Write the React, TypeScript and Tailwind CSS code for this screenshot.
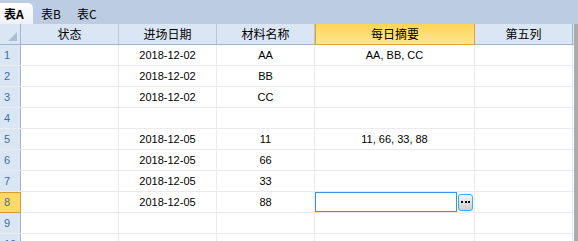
import React from "react";

const rows = [
  { date: "2018-12-02", name: "AA", sum: "AA, BB, CC" },
  { date: "2018-12-02", name: "BB", sum: "" },
  { date: "2018-12-02", name: "CC", sum: "" },
  { date: "", name: "", sum: "" },
  { date: "2018-12-05", name: "11", sum: "11, 66, 33, 88" },
  { date: "2018-12-05", name: "66", sum: "" },
  { date: "2018-12-05", name: "33", sum: "" },
  { date: "2018-12-05", name: "88", sum: "", editing: true },
  { date: "", name: "", sum: "" },
  { date: "", name: "", sum: "" },
];

const cjk = "font-['SimSun','Noto_Sans_CJK_SC',sans-serif]";
const latin = "font-['Liberation_Sans','Noto_Sans_CJK_SC',sans-serif]";

export default function App() {
  return (
    <div className={`w-[578px] h-[241px] overflow-hidden bg-[#ababab] ${cjk} text-[12px] text-black`}>
      {/* Sheet tabs */}
      <div className="h-[24px] bg-[#bccde3] flex items-end">
        <div className="h-[21px] w-[33px] bg-gradient-to-b from-[#ffffff] to-[#eef2f8] rounded-tr-[5px] flex items-center pl-[4px] font-bold">
          表A
        </div>
        <div className="h-[21px] ml-[8px] flex items-center">表B</div>
        <div className="h-[21px] ml-[16px] flex items-center">表C</div>
      </div>

      {/* Grid */}
      <div className="w-[574px] bg-white">
        {/* Column header */}
        <div className="flex h-[21px] bg-[#dbe6f4] border-b border-[#9eb4cf]">
          <div className="w-[21px] border-r border-[#9eb4cf] relative">
            <div className="absolute right-[3px] bottom-[3px] w-0 h-0 border-l-[9px] border-l-transparent border-b-[9px] border-b-[#aebfd3]" />
          </div>
          <div className="w-[98px] border-r border-[#b6c7dc] flex items-center justify-center">状态</div>
          <div className="w-[98px] border-r border-[#b6c7dc] flex items-center justify-center">进场日期</div>
          <div className="w-[98px] border-r border-[#b6c7dc] flex items-center justify-center">材料名称</div>
          <div className="w-[160px] bg-gradient-to-b from-[#ffd458] to-[#ffe78e] border-l border-r border-b border-[#dba33a] -mb-px flex items-center justify-center">
            每日摘要
          </div>
          <div className="w-[98px] border-r border-[#9eb4cf] flex items-center justify-center">第五列</div>
        </div>

        {rows.map((r, i) => (
          <div key={i} className="flex h-[21px] border-b border-[#ebebeb]">
            <div
              className={`w-[21px] border-r flex items-center pl-[4px] ${latin} text-[11px] ${
                r.editing
                  ? "bg-[#ffd966] border-[#d99b2e] border-t border-b -mb-px text-[#3c6cae]"
                  : "bg-[#dbe6f4] border-[#9eb4cf] text-[#3c6cae]"
              }`}
            >
              {i + 1}
            </div>
            <div className="w-[98px] border-r border-[#ebebeb]" />
            <div className={`w-[98px] border-r border-[#ebebeb] flex items-center justify-center ${latin} text-[11px]`}>
              {r.date}
            </div>
            <div className={`w-[98px] border-r border-[#ebebeb] flex items-center justify-center ${latin} text-[11px]`}>
              {r.name}
            </div>
            <div className={`w-[160px] border-r border-[#ebebeb] flex items-center ${latin} text-[11px]`}>
              {r.editing ? (
                <div className="flex items-center w-full h-full">
                  <div className="w-[142px] h-[20px] border border-[#3a93e6] bg-white" />
                  <div className="ml-[1px] w-[15px] h-[17px] rounded-[3px] border border-[#3ab0e8] bg-gradient-to-b from-[#f4f4f4] to-[#cfcfcf] flex items-center justify-center gap-[1.5px]">
                    <span className="w-[2px] h-[2px] bg-black" />
                    <span className="w-[2px] h-[2px] bg-black" />
                    <span className="w-[2px] h-[2px] bg-black" />
                  </div>
                </div>
              ) : (
                <span className="w-full text-center">{r.sum}</span>
              )}
            </div>
            <div className="w-[98px] border-r border-[#dbe6f4]" />
          </div>
        ))}
      </div>
    </div>
  );
}
